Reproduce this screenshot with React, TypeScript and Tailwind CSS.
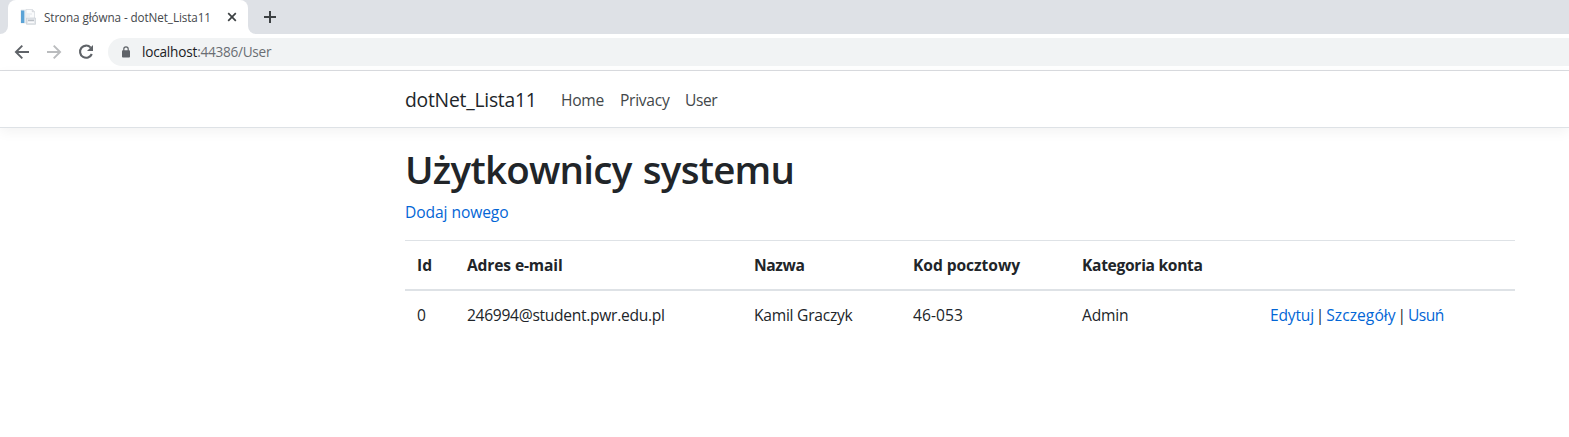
import type { ReactNode } from "react";

function Favicon() {
  return (
    <svg width="16" height="16" viewBox="0 0 16 16" aria-hidden="true">
      <path d="M1 1h10v13H1z" fill="#f3f6f9" stroke="#d4dae0" strokeWidth=".6" />
      <path d="M1 1.5h3V14H1z" fill="#5ba3d6" />
      <path d="M4 1.5h1V14H4z" fill="#b5d5ec" />
      <path d="M6 .5h6.5l2 2V14H6z" fill="#fafbfc" stroke="#d5d9de" strokeWidth=".7" />
      <path d="M12.3.7v2h2" fill="none" stroke="#c5cad0" strokeWidth=".7" />
      <path d="M7 5h5M7 7h3" stroke="#dde2e6" strokeWidth=".8" />
      <path d="M6.5 9h9v6.3h-9z" fill="#e4e7eb" stroke="#c9ced4" strokeWidth=".7" />
      <path d="M8 11.3h6" stroke="#aeb4bb" strokeWidth="1" />
      <path d="M8 13.3h6" stroke="#fff" strokeWidth="1" />
    </svg>
  );
}

function TabStrip() {
  return (
    <div className="flex h-[34px] bg-[#dee1e6]">
      <div className="flex w-2 flex-col justify-end bg-white">
        <div className="h-full rounded-br-lg bg-[#dee1e6]" />
      </div>
      <div className="flex w-60 items-center rounded-t-lg bg-white pl-3">
        <Favicon />
        <span className="ml-2 w-[182px] text-[11.7px] leading-4 tracking-[-0.09px] whitespace-nowrap text-[#45484c]">
          Strona główna - dotNet_Lista11
        </span>
        <svg width="10" height="10" viewBox="0 0 10 10" className="ml-px" aria-hidden="true">
          <path d="M1.2 1.2l7.6 7.6M8.8 1.2L1.2 8.8" stroke="#3c4043" strokeWidth="1.7" />
        </svg>
      </div>
      <div className="w-2 bg-white">
        <div className="h-full rounded-bl-lg bg-[#dee1e6]" />
      </div>
      <svg width="14" height="14" viewBox="0 0 14 14" className="mt-2.5 ml-[7px]" aria-hidden="true">
        <path d="M7 1v12M1 7h12" stroke="#3c4043" strokeWidth="2" />
      </svg>
    </div>
  );
}

function Toolbar() {
  return (
    <div className="flex h-[37px] items-start border-b border-[#dadce0] bg-white pt-1 pl-[13px]">
      <svg width="18" height="28" viewBox="0 0 18 28" aria-hidden="true">
        <path d="M16 14H3.2M9.3 7.6L2.9 14l6.4 6.4" fill="none" stroke="#5f6368" strokeWidth="1.9" />
      </svg>
      <svg width="18" height="28" viewBox="0 0 18 28" className="ml-[14px]" aria-hidden="true">
        <path d="M2 14h12.8M8.7 7.6l6.4 6.4-6.4 6.4" fill="none" stroke="#babcbe" strokeWidth="1.9" />
      </svg>
      <svg width="18" height="28" viewBox="0 0 18 28" className="ml-[14px]" aria-hidden="true">
        <path d="M13.7 9.6A6.1 6.1 0 1 0 14.8 16" fill="none" stroke="#5f6368" strokeWidth="2.1" />
        <path d="M16 7v6h-6z" fill="#5f6368" />
      </svg>
      <div className="ml-[13px] flex h-7 flex-1 items-center rounded-l-full bg-[#f1f3f4] pl-[13px]">
        <svg width="10" height="12" viewBox="0 0 10 12" aria-hidden="true">
          <rect x="1" y="4.3" width="8" height="7.2" rx=".9" fill="#5f6368" />
          <path d="M2.8 5V3a2.2 2.2 0 0 1 4.4 0v2" fill="none" stroke="#5f6368" strokeWidth="1.2" />
        </svg>
        <span className="ml-[11px] text-[13.6px] leading-5 tracking-[-0.2px] text-[#202124]">localhost</span>
        <span className="text-[13.6px] leading-5 tracking-[-0.27px] text-[#6a6e73]">:44386/User</span>
      </div>
    </div>
  );
}

function Navbar() {
  return (
    <header className="h-[57px] border-b border-[#dee2e6] bg-white shadow-[0_4px_12px_rgba(0,0,0,0.05)]">
      <nav className="flex h-14 items-center pt-0.5 pl-[405px]">
        <a href="#" className="w-[156px] text-[19.3px] leading-[30px] tracking-[-0.22px] text-[#212529]">
          dotNet_Lista11
        </a>
        <a href="#" className="w-[59px] text-[15.6px] leading-6 tracking-[-0.3px] text-[#43474a]">Home</a>
        <a href="#" className="w-[65px] text-[15.6px] leading-6 tracking-[-0.28px] text-[#43474a]">Privacy</a>
        <a href="#" className="text-[15.6px] leading-6 tracking-[-0.45px] text-[#43474a]">User</a>
      </nav>
    </header>
  );
}

function Link({ className, children }: { className: string; children: ReactNode }) {
  return (
    <a href="#" className={`text-[#0366d6] ${className}`}>
      {children}
    </a>
  );
}

function UsersTable() {
  return (
    <table className="w-[1110px] table-fixed border-separate border-spacing-0 text-left text-[15.6px] leading-6">
      <colgroup>
        <col className="w-[50px]" />
        <col className="w-[287px]" />
        <col className="w-[159px]" />
        <col className="w-[169px]" />
        <col className="w-[188px]" />
        <col className="w-[257px]" />
      </colgroup>
      <thead>
        <tr className="[&>th]:border-t [&>th]:border-b-2 [&>th]:border-[#dee2e6] [&>th]:p-3 [&>th]:font-bold">
          <th>Id</th>
          <th className="tracking-[-0.14px]">Adres e-mail</th>
          <th className="tracking-[-0.4px]">Nazwa</th>
          <th className="tracking-[-0.06px]">Kod pocztowy</th>
          <th className="tracking-[-0.31px]">Kategoria konta</th>
          <th />
        </tr>
      </thead>
      <tbody>
        <tr className="whitespace-nowrap [&>td]:p-3">
          <td>0</td>
          <td className="tracking-[-0.3px]">246994@student.pwr.edu.pl</td>
          <td className="tracking-[-0.25px]">Kamil Graczyk</td>
          <td className="tracking-[0.05px]">46-053</td>
          <td className="tracking-[-0.18px]">Admin</td>
          <td className="[word-spacing:-2.2px]">
            <Link className="tracking-[-0.2px]">Edytuj</Link> | <Link className="tracking-[0.06px]">Szczegóły</Link> |{" "}
            <Link className="tracking-[-0.5px]">Usuń</Link>
          </td>
        </tr>
      </tbody>
    </table>
  );
}

export default function App() {
  return (
    <div className="h-[437px] overflow-hidden bg-white font-['Open_Sans','Noto_Sans',sans-serif] text-[#212529]">
      <TabStrip />
      <Toolbar />
      <Navbar />
      <main className="pt-[17px] pl-[405px]">
        <h1 className="mb-[7px] text-[38.5px] leading-[48px] font-semibold tracking-[-0.74px] [word-spacing:2px]">
          Użytkownicy systemu
        </h1>
        <p className="mb-4 text-[15.6px] leading-6">
          <Link className="tracking-[-0.08px]">Dodaj nowego</Link>
        </p>
        <UsersTable />
      </main>
    </div>
  );
}
